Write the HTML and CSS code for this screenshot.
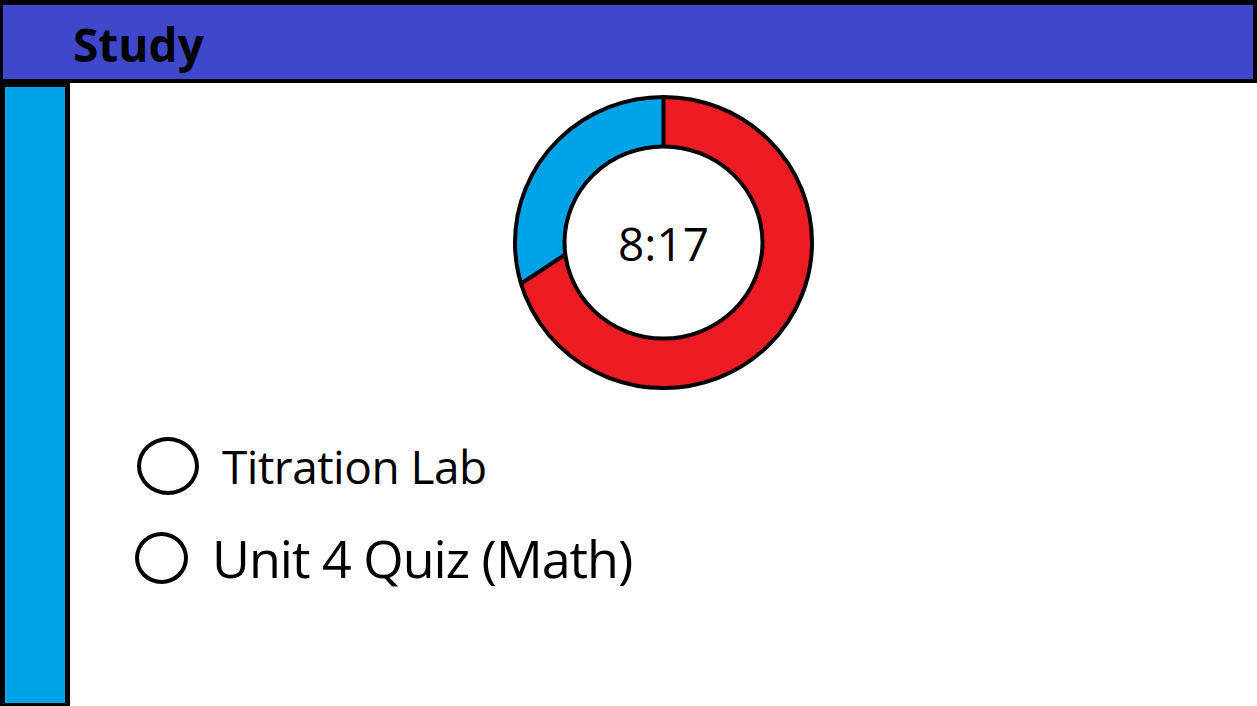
FILE: index.html
```html
<!DOCTYPE html>
<html>
<head>
<meta charset="utf-8">
<link rel="stylesheet" href="styles.css">
</head>
<body>
<header class="topbar"><h1 class="title">Study</h1></header>
<div class="layout">
  <aside class="sidebar"></aside>
  <main class="main">
    <div class="timer">
      <svg class="donut" width="308" height="302" viewBox="0 0 308 302">
        <ellipse cx="153.5" cy="150.5" rx="148.5" ry="145.5" fill="#ed1c24"/>
        <path d="M153.5 5 A148.5 145.5 0 0 0 12 191 L55 163 A99 96 0 0 1 153.5 54.5 Z" fill="#00a2e8"/>
        <ellipse cx="153.5" cy="150.5" rx="148.5" ry="145.5" fill="none" stroke="#000" stroke-width="4"/>
        <ellipse cx="153.5" cy="150.5" rx="99" ry="96" fill="#fff" stroke="#000" stroke-width="4"/>
        <line x1="153.5" y1="5" x2="153.5" y2="55" stroke="#000" stroke-width="4"/>
        <line x1="12" y1="191" x2="56" y2="162" stroke="#000" stroke-width="4"/>
      </svg>
      <div class="time">8:17</div>
    </div>
    <ul class="tasks">
      <li class="task task-1"><span class="check check-1"></span><span class="label label-1">Titration Lab</span></li>
      <li class="task task-2"><span class="check check-2"></span><span class="label label-2">Unit 4 Quiz (Math)</span></li>
    </ul>
  </main>
</div>
</body>
</html>
```
FILE: styles.css
```css
* { box-sizing: border-box; }
html, body {
  margin: 0;
  padding: 0;
  width: 1257px;
  height: 706px;
  overflow: hidden;
  background: #fff;
  font-family: "Open Sans", "Liberation Sans", sans-serif;
  color: #000;
}
.topbar {
  height: 83px;
  background: #3f48cc;
  border-style: solid;
  border-color: #000;
  border-width: 5px 4px 4px 3px;
  display: flex;
  align-items: center;
  padding-left: 70px;
}
.title {
  margin: 0;
  font-size: 46px;
  font-weight: 700;
  line-height: 1;
  padding-top: 3px;
}
.layout {
  display: flex;
  height: 623px;
}
.sidebar {
  width: 70px;
  flex: none;
  background: #00a2e8;
  border-style: solid;
  border-color: #000;
  border-width: 4px 5px 3px 5px;
}
.main {
  flex: 1;
  display: flex;
  flex-direction: column;
  padding-top: 9px;
}
.timer {
  display: grid;
  align-self: center;
  width: 308px;
  height: 302px;
}
.donut, .time {
  grid-area: 1 / 1;
}
.donut { display: block; }
.time {
  align-self: center;
  justify-self: center;
  font-size: 46px;
  line-height: 1;
}
.tasks {
  list-style: none;
  margin: 43px 0 0 0;
  padding: 0;
  display: flex;
  flex-direction: column;
  gap: 37px;
}
.task {
  display: flex;
  align-items: center;
}
.check {
  display: block;
  border: 4px solid #000;
  border-radius: 50%;
  flex: none;
}
.check-1 { width: 62px; height: 58px; margin-left: 67px; margin-right: 23px; }
.check-2 { width: 53px; height: 52px; margin-left: 65px; margin-right: 24px; }
.label { line-height: 1; }
.label-1 { font-size: 46px; letter-spacing: -0.5px; }
.label-2 { font-size: 52px; letter-spacing: -1px; }
```
